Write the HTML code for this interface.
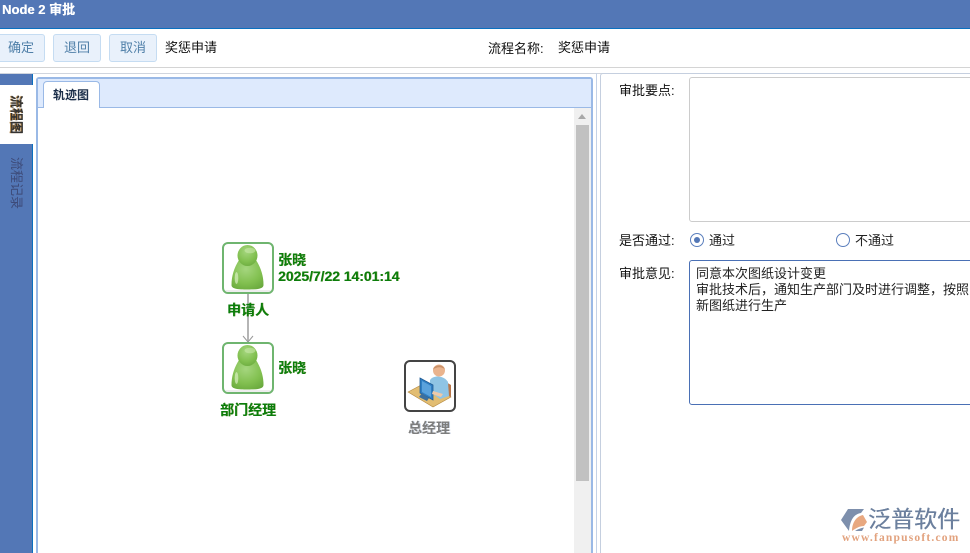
<!DOCTYPE html>
<html><head><meta charset="utf-8"><style>
html,body{margin:0;padding:0;background:#fff;width:970px;height:553px;overflow:hidden}
body{font-family:"Liberation Sans","Noto Sans CJK SC",sans-serif;font-size:13px;color:#222}
div{position:absolute;box-sizing:border-box}
#root{left:0;top:0;width:970px;height:553px;overflow:hidden;background:#fff}
.t{white-space:nowrap;line-height:16px}
.btn{top:34px;height:28px;border:1px solid #c5dcf2;border-radius:3px;background:#e9f1fb;color:#4f7fa8;text-align:center;line-height:26px;font-size:13px}
.g{color:#0b7d0b;font-weight:bold;white-space:nowrap;font-size:14px;line-height:16px;text-shadow:.5px 0 0 rgba(90,130,20,.8)}
.box{border:2px solid #6fb56f;border-radius:6px;width:52px;height:52px;background:#fff;overflow:hidden}
.v{writing-mode:vertical-rl;text-orientation:sideways;white-space:nowrap;line-height:14px;font-size:13px}
</style></head><body><div id="root">
<div style="left:0;top:0;width:970px;height:29px;background:#5377b6;border-bottom:1px solid #0a70c0"></div>
<div class="t" style="left:2px;top:2px;color:#fff;font-weight:bold;font-size:13px;text-shadow:.3px 0 0 #fff">Node 2 审批</div>

<div class="btn" style="left:-3px;width:48px">确定</div>
<div class="btn" style="left:53px;width:48px">退回</div>
<div class="btn" style="left:109px;width:48px">取消</div>
<div class="t" style="left:165px;top:39.500px;color:#111">奖惩申请</div>
<div class="t" style="left:488px;top:41px;color:#111">流程名称:</div>
<div class="t" style="left:558px;top:39.500px;color:#111">奖惩申请</div>

<div style="left:0;top:67px;width:970px;height:1px;background:#d4d4d4"></div>
<div style="left:0;top:73px;width:970px;height:1px;background:#d0d5de"></div>

<!-- side tabs -->
<div style="left:0;top:74px;width:33px;height:11px;background:#5377b6;border-right:1px solid #0a70c0"></div>
<div style="left:0;top:144px;width:33px;height:409px;background:#5377b6;border-right:1px solid #0a70c0"></div>
<div class="v" style="left:9px;top:95px;color:#333;font-weight:bold;text-shadow:0 1px 0 #b08040">流程图</div>
<div class="v" style="left:9px;top:157px;color:#3d4a78">流程记录</div>

<!-- left panel -->
<div style="left:36px;top:77px;width:557px;height:490px;border:2px solid #9ab9e6;border-radius:3px 3px 0 0;background:#fff"></div>
<div style="left:38px;top:79px;width:553px;height:29px;background:#deeafd;border-bottom:1px solid #9ab9e6"></div>
<div style="left:43px;top:81px;width:57px;height:27px;background:#fff;border:1px solid #9ab9e6;border-bottom:none;border-radius:4px 4px 0 0"></div>
<div class="t" style="left:53px;top:87px;font-weight:bold;font-size:12px;color:#1c2f4a">轨迹图</div>
<div style="left:574px;top:108px;width:17px;height:445px;background:#f0f0f0"></div>
<div style="left:576px;top:125px;width:13px;height:356px;background:#c1c1c1"></div>
<div style="left:578px;top:114px;width:0;height:0;border-left:4px solid transparent;border-right:4px solid transparent;border-bottom:5px solid #a8a8a8"></div>

<!-- flow -->
<svg style="position:absolute;left:240px;top:290px" width="16" height="56"><path d="M8 2V52" stroke="#b5b5b5" stroke-width="2" fill="none"/><path d="M3 46L8 52L13 46" stroke="#999" stroke-width="1" fill="none"/></svg>

<svg width="0" height="0" style="position:absolute"><defs>
<radialGradient id="gr" cx=".45" cy=".3" r=".8"><stop offset="0" stop-color="#a5d67f"/><stop offset=".6" stop-color="#82c050"/><stop offset="1" stop-color="#68a83c"/></radialGradient>
</defs></svg>

<div class="box" style="left:222px;top:242px"><svg width="48" height="48"><path d="M15 16C10 24 7.500 32 7.500 41C7.500 45 14 45.500 23.500 45.500C33 45.500 39.500 45 39.500 41C39.500 32 37 24 32 16Z" fill="url(#gr)"/><ellipse cx="23.500" cy="11.500" rx="10" ry="10.500" fill="url(#gr)"/><ellipse cx="26" cy="6.500" rx="5.500" ry="2.800" fill="#c8e8a8" opacity=".6"/><ellipse cx="12.500" cy="34" rx="1.800" ry="6" fill="#d8f0c0" opacity=".7"/><rect x="0" y="46" width="48" height="2" fill="#eee"/></svg></div>
<div class="g" style="left:278px;top:252px">张晓</div>
<div class="g" style="left:278px;top:268px;letter-spacing:-.05px">2025/7/22 14:01:14</div>
<div class="g" style="left:227px;top:302px">申请人</div>

<div class="box" style="left:222px;top:342px"><svg width="48" height="48"><path d="M15 16C10 24 7.500 32 7.500 41C7.500 45 14 45.500 23.500 45.500C33 45.500 39.500 45 39.500 41C39.500 32 37 24 32 16Z" fill="url(#gr)"/><ellipse cx="23.500" cy="11.500" rx="10" ry="10.500" fill="url(#gr)"/><ellipse cx="26" cy="6.500" rx="5.500" ry="2.800" fill="#c8e8a8" opacity=".6"/><ellipse cx="12.500" cy="34" rx="1.800" ry="6" fill="#d8f0c0" opacity=".7"/><rect x="0" y="46" width="48" height="2" fill="#eee"/></svg></div>
<div class="g" style="left:278px;top:360px">张晓</div>
<div class="g" style="left:220px;top:402px">部门经理</div>

<div style="left:404px;top:360px;width:52px;height:52px;border:2px solid #444;border-radius:6px;background:#fff;overflow:hidden"><svg width="48" height="48">
<path d="M2 30L19 21L45 35L27 45Z" fill="#e2bd72" stroke="#b58a42" stroke-width=".6"/>
<path d="M40 20L45 23L45 35L40 32Z" fill="#b8764a"/>
<path d="M24 18C27 13 38 13 42 20L43 34L34 37L24 30Z" fill="#8fc4e4"/>
<circle cx="33" cy="8.500" r="6" fill="#eab48e"/><path d="M27 7.500C28 2.500 37 1.500 39 7.500C36 4.500 31 4.500 27 7.500Z" fill="#c99068"/>
<path d="M14 16L27 23L27 38L14 31Z" fill="#2f7fc4" stroke="#1e5a94" stroke-width=".8"/>
<path d="M16 19L25 24L25 35L16 30Z" fill="#5aa2dc"/>
<path d="M16 31L23 36L21 39L13 35Z" fill="#3d6f9c"/>
<path d="M27 29L37 32L35 35L26 32Z" fill="#efc9a8"/>
</svg></div>
<div class="t" style="left:408px;top:420px;font-weight:bold;font-size:14px;color:#7d7d7d;text-shadow:1px 0 0 rgba(150,170,200,.5)">总经理</div>

<!-- right panel -->
<div style="left:596px;top:73px;width:2px;height:480px;border-left:1px solid #c5d2e6"></div>
<div style="left:600px;top:73px;width:380px;height:490px;border:1px solid #c5cfdf;border-radius:3px;background:#fff"></div>
<div class="t" style="left:619px;top:83px;color:#111">审批要点:</div>
<div style="left:689px;top:77px;width:300px;height:145px;border:1px solid #ccc;border-radius:3px;background:#fff"></div>

<div class="t" style="left:619px;top:233px;color:#111">是否通过:</div>
<div style="left:690px;top:233px;width:14px;height:14px;border:1px solid #5b7fbd;border-radius:50%;background:#fff"></div>
<div style="left:694px;top:237px;width:6px;height:6px;border-radius:50%;background:#5377b6"></div>
<div class="t" style="left:709px;top:233px;color:#222">通过</div>
<div style="left:836px;top:233px;width:14px;height:14px;border:1px solid #5b7fbd;border-radius:50%;background:#fff"></div>
<div class="t" style="left:855px;top:233px;color:#222">不通过</div>

<div class="t" style="left:619px;top:266px;color:#111">审批意见:</div>
<div style="left:689px;top:260px;width:300px;height:145px;border:1px solid #4a70b5;border-radius:3px;background:#fff"></div>
<div class="t" style="left:696px;top:266px;color:#222">同意本次图纸设计变更</div>
<div class="t" style="left:696px;top:282px;color:#222">审批技术后，通知生产部门及时进行调整，按照</div>
<div class="t" style="left:696px;top:298px;color:#222">新图纸进行生产</div>

<!-- logo -->
<svg style="position:absolute;left:840px;top:507px" width="30" height="26"><path d="M8 2H24L21 6C14 7 10 13 9 24L1 13Z" fill="#7d8fac"/><path d="M12 24C12 15 17 9 23 8L27 15L24 19C20 19 16 21 12 24Z" fill="#e8a880"/><path d="M15 24C18 22 21 21 24 20.500L22 24Z" fill="#7d8fac"/></svg>
<div class="t" style="left:868px;top:506px;font-size:23px;line-height:26px;color:#6c809e;text-shadow:.4px 0 0 #6c809e">泛普软件</div>
<div class="t" style="left:842px;top:530px;font-family:'Liberation Serif',serif;font-weight:bold;font-size:11.500px;letter-spacing:1.200px;color:#e2a27e">www.fanpusoft.com</div>
</div></body></html>
